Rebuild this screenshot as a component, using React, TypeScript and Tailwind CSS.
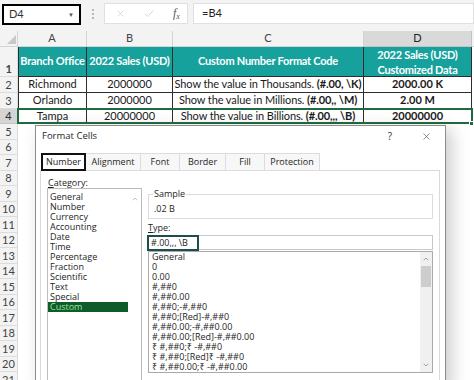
import React from "react";
import { Check, ChevronDown, ChevronUp, X } from "lucide-react";

const columns = [
  { label: "A", width: "w-[69px]", active: false },
  { label: "B", width: "w-[86px]", active: false },
  { label: "C", width: "w-[191px]", active: false },
  { label: "D", width: "w-[108px]", active: true },
];

const rows = [
  { n: 2, branch: "Richmond", sales: "2000000", text: "Show the value in Thousands.", code: "(#.00, \\K)", result: "2000.00 K", h: "h-[16px]" },
  { n: 3, branch: "Orlando", sales: "2000000", text: "Show the value in Millions.", code: "(#.00,, \\M)", result: "2.00 M", h: "h-[15.5px]" },
  { n: 4, branch: "Tampa", sales: "20000000", text: "Show the value in Billions.", code: "(#.00,,, \\B)", result: "20000000", h: "h-[15.5px]" },
];

const emptyRows = [5, 6, 7, 8, 9, 10, 11, 12, 13, 14, 15, 16, 17, 18, 19, 20, 21];

const tabs = [
  { label: "Number", width: "w-[45px]" },
  { label: "Alignment", width: "w-[55px]" },
  { label: "Font", width: "w-[39px]" },
  { label: "Border", width: "w-[46px]" },
  { label: "Fill", width: "w-[39px]" },
  { label: "Protection", width: "w-[55px]" },
];

const categories = [
  "General", "Number", "Currency", "Accounting", "Date", "Time",
  "Percentage", "Fraction", "Scientific", "Text", "Special", "Custom",
];

const formats = [
  "General", "0", "0.00", "#,##0", "#,##0.00", "#,##0;-#,##0",
  "#,##0;[Red]-#,##0", "#,##0.00;-#,##0.00", "#,##0.00;[Red]-#,##0.00",
  "₹ #,##0;₹ -#,##0", "₹ #,##0;[Red]₹ -#,##0", "₹ #,##0.00;₹ -#,##0.00",
];

function RowHead({ n, active = false, tall = false }: { n: number; active?: boolean; tall?: boolean }) {
  return (
    <div
      className={`w-[18px] shrink-0 flex justify-center border-r border-b text-[11px] leading-none ${
        active ? "bg-[#d4d4d4] border-[#c4c4c4] text-[#2b2b2b]" : "bg-[#f3f3f3] border-[#dcdcdc] text-[#444]"
      } ${tall ? "items-end pb-[2px]" : "items-center"}`}
    >
      {n}
    </div>
  );
}

function FormulaBar() {
  return (
    <div className="h-[31px] bg-[#f3f3f3] flex items-start pt-[3px]">
      <div className="mt-[1px] ml-[2px] w-[79px] h-[21px] border-2 border-black bg-white flex items-center justify-between px-[5px] text-[11px] text-[#333]">
        <span>D4</span>
        <span className="text-[6px] text-[#555]">▼</span>
      </div>
      <div className="ml-[11px] mt-[6px] flex flex-col gap-[2px]">
        <span className="w-[2px] h-[2px] bg-[#b8b8b8]" />
        <span className="w-[2px] h-[2px] bg-[#b8b8b8]" />
        <span className="w-[2px] h-[2px] bg-[#b8b8b8]" />
      </div>
      <div className="ml-[10px] w-[84px] h-[21px] bg-white border border-[#e0e0e0] flex items-center pl-[10px] text-[#c4c4c4]">
        <X size={11} strokeWidth={1.3} />
        <Check size={12} strokeWidth={1.3} className="ml-[17px]" />
        <span className="ml-[18px] italic text-[12px] text-[#555] [font-family:'Liberation_Serif',serif]">
          f<span className="text-[8px] align-[-2px]">x</span>
        </span>
      </div>
      <div className="ml-[5px] flex-1 h-[21px] bg-white border border-[#e0e0e0] pl-[8px] text-[11px] text-[#222] flex items-center">
        =B4
      </div>
    </div>
  );
}

function Sheet() {
  return (
    <div>
      <div className="flex h-[16px] bg-[#f3f3f3] text-[11px] text-[#444]">
        <div className="w-[18px] border-r border-b border-[#d4d4d4] flex items-end justify-end pr-[1px] pb-[2px]">
          <svg width="9" height="9" viewBox="0 0 9 9">
            <polygon points="9,0 9,9 0,9" fill="#c8c8c8" />
          </svg>
        </div>
        {columns.map((c) => (
          <div
            key={c.label}
            className={`${c.width} border-r border-b flex items-center justify-center ${
              c.active ? "bg-[#d9d9d9] border-[#c2c2c2] text-[#222]" : "border-[#d4d4d4]"
            }`}
          >
            {c.label}
          </div>
        ))}
        <div className="flex-1 border-b border-[#d4d4d4]" />
      </div>

      <div className="flex h-[30px] text-[11px] font-bold text-white tracking-[-0.25px] whitespace-nowrap">
        <RowHead n={1} tall />
        <div className="w-[69px] bg-[#17a19d] border-r border-b border-l border-[#2d2d2d] flex items-center justify-center">
          Branch Office
        </div>
        <div className="w-[86px] bg-[#17a19d] border-r border-b border-[#2d2d2d] flex items-center justify-center">
          2022 Sales (USD)
        </div>
        <div className="w-[191px] bg-[#17a19d] border-r border-b border-[#2d2d2d] flex items-center justify-center">
          Custom Number Format Code
        </div>
        <div className="w-[108px] bg-[#17a19d] border-r border-b border-[#2d2d2d] flex flex-col items-center justify-center leading-[15px]">
          <span>2022 Sales (USD)</span>
          <span>Customized Data</span>
        </div>
      </div>

      {rows.map((r) => (
        <div key={r.n} className={`relative flex ${r.h} text-[11px] text-[#1a1a1a]`}>
          <RowHead n={r.n} active={r.n === 4} />
          <div className="w-[69px] border-r border-b border-l border-[#2d2d2d] flex items-center justify-center">{r.branch}</div>
          <div className="w-[86px] border-r border-b border-[#2d2d2d] flex items-center justify-center">{r.sales}</div>
          <div className="w-[191px] border-r border-b border-[#2d2d2d] flex items-center justify-center whitespace-nowrap tracking-[-0.1px]">
            {r.text}&nbsp;<span className="font-bold">{r.code}</span>
          </div>
          <div className="w-[108px] border-r border-b border-[#2d2d2d] flex items-center justify-center font-bold">{r.result}</div>
          {r.n === 4 && (
            <>
              <div className="absolute left-[17px] top-[-1px] w-[456px] bottom-0 border-2 border-[#1f6b41] pointer-events-none" />
              <div className="absolute left-[469px] bottom-[-2px] w-[5px] h-[5px] bg-[#1f6b41] border border-white" />
            </>
          )}
        </div>
      ))}

      {emptyRows.map((n) => (
        <div key={n} className="flex h-[15.5px]">
          <RowHead n={n} />
          <div className="flex-1 bg-white" />
        </div>
      ))}
    </div>
  );
}

function FormatCellsDialog() {
  return (
    <div className="absolute left-[35px] top-[125px] w-[411px] h-[262px] bg-white border border-[#8c8c8c] shadow-[6px_4px_16px_rgba(0,0,0,0.2)] flex flex-col text-[9px] text-[#1e1e1e] [font-family:'Open_Sans','Noto_Sans','DejaVu_Sans',sans-serif]">
      <div className="h-[21px] shrink-0 flex items-center justify-between pl-[6px] pr-[13px]">
        <span className="text-[9.5px]">Format Cells</span>
        <div className="flex items-center">
          <span className="text-[10px] text-[#333]">?</span>
          <X size={11} strokeWidth={1.2} className="ml-[29px] text-[#333]" />
        </div>
      </div>

      <div className="relative z-10 mt-[6px] -mb-[1px] ml-[5px] flex h-[18px]">
        {tabs.map((t, i) =>
          i === 0 ? (
            <div key={t.label} className={`${t.width} border-2 border-[#111] bg-white flex items-center justify-center`}>
              {t.label}
            </div>
          ) : (
            <div key={t.label} className={`${t.width} bg-[#f7f7f7] border-t border-r border-b border-[#dcdcdc] flex items-center justify-center`}>
              {t.label}
            </div>
          )
        )}
      </div>

      <div className="ml-[4px] w-[400px] flex-1 border border-[#dadada] bg-white flex pl-[6px] pt-[6px]">
        <div className="w-[95px] flex flex-col">
          <div className="leading-[11px] pl-[1px]">
            <span className="underline">C</span>ategory:
          </div>
          <div className="flex-1 border border-[#bcbcbc] flex">
            <div className="w-[80px] pt-[3px] leading-[10px]">
              {categories.map((c) => (
                <div key={c} className={`pl-[2px] h-[10px] ${c === "Custom" ? "bg-[#0f5b2a] text-[#9ee39a]" : ""}`}>
                  {c}
                </div>
              ))}
            </div>
            <div className="flex-1 flex justify-center pt-[6px]">
              <ChevronUp size={8} strokeWidth={1.5} className="text-[#8a8a8a]" />
            </div>
          </div>
        </div>

        <div className="ml-[6px] w-[285px] mt-[17px] flex flex-col">
          <div className="relative h-[25px] border border-[#dcdcdc] pl-[5px] pt-[9px] leading-[10px]">
            <span className="absolute -top-[6px] left-[4px] bg-white px-[1px] leading-[10px]">Sample</span>
            .02 B
          </div>
          <div className="mt-[4px] leading-[10px]">
            <span className="underline">T</span>ype:
          </div>
          <div className="relative mt-[2px] h-[15px] border border-[#c8c8c8] pl-[2px] flex items-center">
            #.00,,, \B
            <div className="absolute left-[-2px] top-[-1px] w-[52px] h-[16px] border-2 border-[#1e4d4d]" />
          </div>
          <div className="mt-[1px] h-[122px] border border-[#a9a9a9] flex">
            <div className="flex-1 pl-[3px] leading-[10px] whitespace-nowrap">
              {formats.map((f) => (
                <div key={f} className="h-[10px]">
                  {f}
                </div>
              ))}
            </div>
            <div className="w-[12px] bg-[#f0f0f0] flex flex-col">
              <div className="h-[14px] flex items-center justify-center">
                <ChevronUp size={8} strokeWidth={1.6} className="text-[#606060]" />
              </div>
              <div className="mx-[1px] h-[21px] bg-[#cdcdcd]" />
              <div className="flex-1" />
              <div className="h-[14px] flex items-center justify-center">
                <ChevronDown size={8} strokeWidth={1.6} className="text-[#606060]" />
              </div>
            </div>
          </div>
        </div>
      </div>
    </div>
  );
}

export default function App() {
  return (
    <div className="relative w-[474px] h-[380px] overflow-hidden bg-white [font-family:Lato,'Liberation_Sans',sans-serif]">
      <FormulaBar />
      <Sheet />
      <FormatCellsDialog />
    </div>
  );
}
